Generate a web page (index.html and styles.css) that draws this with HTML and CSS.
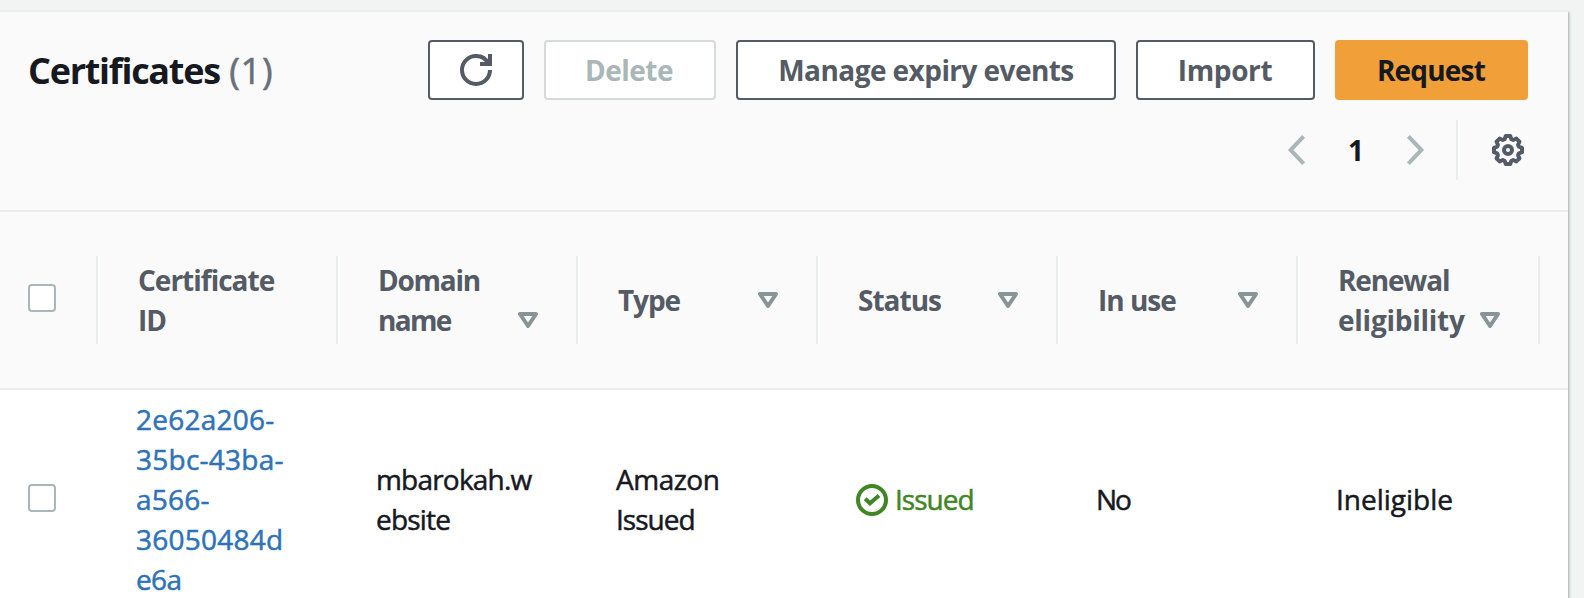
FILE: index.html
```
<!DOCTYPE html>
<html lang="en">
<head>
<meta charset="utf-8">
<title>Certificates</title>
<link rel="stylesheet" href="styles.css">
</head>
<body>
<svg class="defs" aria-hidden="true">
  <symbol id="sort" viewBox="0 0 20 16"><path d="M2 2h16l-8 12z" fill="none" stroke="currentColor" stroke-width="4" stroke-linejoin="round"/></symbol>
</svg>
<main class="panel">
  <header class="panel-header">
    <div class="title-row">
      <h1 class="title"><span class="title-text">Certificates</span> <span class="count">(1)</span></h1>
      <div class="actions">
        <button class="btn btn-icon" aria-label="Refresh">
          <svg class="icon" viewBox="0 0 16 16" fill="none" stroke="currentColor" stroke-width="2"><path d="M10 5h5V0"/><path d="M15 8a6.957 6.957 0 0 1-7 7 6.957 6.957 0 0 1-7-7 6.957 6.957 0 0 1 7-7 6.87 6.87 0 0 1 6.3 4"/></svg>
        </button>
        <button class="btn btn-delete" disabled>Delete</button>
        <button class="btn btn-manage">Manage expiry events</button>
        <button class="btn btn-import">Import</button>
        <button class="btn btn-request">Request</button>
      </div>
    </div>
    <div class="tools">
      <svg class="icon arrow" viewBox="0 0 16 16" fill="none" stroke="currentColor" stroke-width="2"><path d="M10.8 1.2 4.3 8l6.5 6.8"/></svg>
      <span class="page">1</span>
      <svg class="icon arrow" viewBox="0 0 16 16" fill="none" stroke="currentColor" stroke-width="2"><path d="M4.7 1.2 11.2 8l-6.5 6.8"/></svg>
      <span class="divider"></span>
      <svg class="icon gear" viewBox="-8 -8 16 16" fill="none" stroke="currentColor" stroke-width="2" stroke-linejoin="round"><circle r="2"/><path d="M-1.7-5.4-1.1-7H1.1L1.7-5.4 2.62-5.02 4.17-5.73 5.73-4.17 5.02-2.62 5.4-1.7 7-1.1V1.1L5.4 1.7 5.02 2.62 5.73 4.17 4.17 5.73 2.62 5.02 1.7 5.4 1.1 7H-1.1L-1.7 5.4-2.62 5.02-4.17 5.73-5.73 4.17-5.02 2.62-5.4 1.7-7 1.1V-1.1L-5.4-1.7-5.02-2.62-5.73-4.17-4.17-5.73-2.62-5.02z"/></svg>
    </div>
  </header>
  <section class="grid grid-head">
    <div class="head-cell select"><span class="checkbox"></span></div>
    <div class="head-cell"><span class="label w-certificate">Certificate<br>ID</span></div>
    <div class="head-cell two-line"><span class="label w-domain">Domain<br><span class="w-name">name</span></span><svg class="sort"><use href="#sort"/></svg></div>
    <div class="head-cell"><span class="label w-type">Type</span><svg class="sort"><use href="#sort"/></svg></div>
    <div class="head-cell"><span class="label w-status">Status</span><svg class="sort"><use href="#sort"/></svg></div>
    <div class="head-cell"><span class="label w-use">In use</span><svg class="sort"><use href="#sort"/></svg></div>
    <div class="head-cell two-line"><span class="label w-renewal">Renewal<br><span class="w-elig">eligibility</span></span><svg class="sort"><use href="#sort"/></svg></div>
  </section>
  <section class="grid grid-row">
    <div class="cell select"><span class="checkbox"></span></div>
    <div class="cell"><a class="link">2e62a206-<br>35bc-43ba-<br>a566-<br>36050484d<br><span class="link-end">e6a</span></a></div>
    <div class="cell"><span class="v-domain">mbarokah.w<br>ebsite</span></div>
    <div class="cell"><span class="v-amazon">Amazon<br><span class="v-issued">Issued</span></span></div>
    <div class="cell status"><svg class="icon" viewBox="0 0 16 16" fill="none" stroke="currentColor" stroke-width="2"><circle cx="8" cy="8" r="7"/><path d="M4.6 7.4 7 9.6l4.5-3.9"/></svg><span class="v-issued">Issued</span></div>
    <div class="cell"><span class="v-no">No</span></div>
    <div class="cell"><span>Ineligible</span></div>
  </section>
</main>
</body>
</html>
```
FILE: styles.css
```
* { box-sizing: border-box; }
body {
  margin: 0;
  padding-top: 10px;
  height: 598px;
  overflow: hidden;
  background: #f2f4f4;
  color: #16191f;
  font: 500 28px/40px "Open Sans", "Noto Sans", sans-serif;
}
.defs { display: none; }
.panel {
  width: 1568px;
  height: 588px;
  background: #fff;
  border-top: 2px solid #eaeded;
  box-shadow: 0 2px 2px rgba(0, 28, 36, .3), 2px 2px 2px rgba(0, 28, 36, .15);
}
.panel-header {
  height: 200px;
  padding: 28px 40px 0 28px;
  background: #fafafa;
  border-bottom: 2px solid #eaeded;
}
.title-row { display: flex; justify-content: space-between; height: 60px; }
.title { margin: 0; padding-top: 1px; font-size: 36px; line-height: 60px; font-weight: 700; white-space: nowrap; }
.title-text { letter-spacing: -1.28px; }
.count { color: #687078; font-weight: 500; letter-spacing: .8px; -webkit-text-stroke: .6px currentColor; }
.actions { display: flex; gap: 20px; }
.btn {
  height: 60px;
  padding: 0;
  display: flex;
  align-items: center;
  justify-content: center;
  border: 2px solid #545b64;
  border-radius: 4px;
  background: #fff;
  color: #545b64;
  font: 700 28px/40px "Open Sans", "Noto Sans", sans-serif;
  white-space: nowrap;
}
.btn-icon { width: 96px; }
.btn-delete { width: 172px; padding-right: 2px; border-color: #d5dbdb; color: #aab7b8; letter-spacing: -.5px; }
.btn-manage { width: 380px; letter-spacing: -.56px; }
.btn-import { width: 179px; padding-right: 1px; letter-spacing: -.4px; }
.btn-request { width: 193px; padding-right: 1px; border-color: #f19f39; background: #f19f39; color: #16191f; letter-spacing: -.8px; }
.icon { width: 32px; height: 32px; flex: none; display: block; }
.tools {
  display: flex;
  align-items: center;
  justify-content: flex-end;
  height: 60px;
  margin-top: 20px;
  padding-right: 4px;
}
.arrow { color: #aab7b8; }
.page { width: 85px; padding-right: 1px; text-align: center; font-weight: 700; }
.divider { width: 2px; height: 60px; margin: 0 34px 0 25px; background: #eaeded; }
.gear { color: #545b64; }
.grid { display: grid; grid-template-columns: 98px repeat(5, 240px) 242px; }
.grid-head {
  height: 178px;
  padding: 44px 0;
  background: #fafafa;
  border-bottom: 2px solid #eaeded;
}
.head-cell {
  display: flex;
  align-items: center;
  justify-content: space-between;
  height: 88px;
  padding: 0 38px 0 40px;
  border-right: 2px solid #eaeded;
  color: #545b64;
  font-weight: 700;
  white-space: nowrap;
}
.head-cell.select { justify-content: flex-start; padding: 0 0 4px 28px; }
.checkbox { width: 28px; height: 28px; border: 2px solid #aab7b8; border-radius: 4px; background: #fff; }
.sort { width: 20px; height: 16px; color: #879596; flex: none; }
.two-line .sort { align-self: flex-end; margin-bottom: 16px; }
.w-certificate { letter-spacing: -1px; }
.w-domain { letter-spacing: -1.25px; }
.w-name { letter-spacing: -1.7px; }
.w-type { letter-spacing: -1.1px; }
.w-status { letter-spacing: -1px; }
.w-use { letter-spacing: -1px; }
.w-renewal { letter-spacing: -1.15px; }
.w-elig { letter-spacing: -.25px; }
.grid-row { height: 208px; grid-template-rows: 208px; overflow: hidden; }
.cell {
  display: flex;
  align-items: center;
  padding: 10px 0 0 38px;
  white-space: nowrap;
  -webkit-text-stroke: .5px currentColor;
}
.cell.select { padding: 8px 0 0 28px; }
.link { color: #2e73b8; letter-spacing: .25px; }
.link-end { letter-spacing: -.6px; }
.v-domain { letter-spacing: -.8px; }
.v-amazon { letter-spacing: -.5px; }
.v-issued { letter-spacing: -1px; }
.v-no { letter-spacing: -2px; }
.status { gap: 7px; color: #3f8624; }
.status .icon { margin-top: 2px; }
```
